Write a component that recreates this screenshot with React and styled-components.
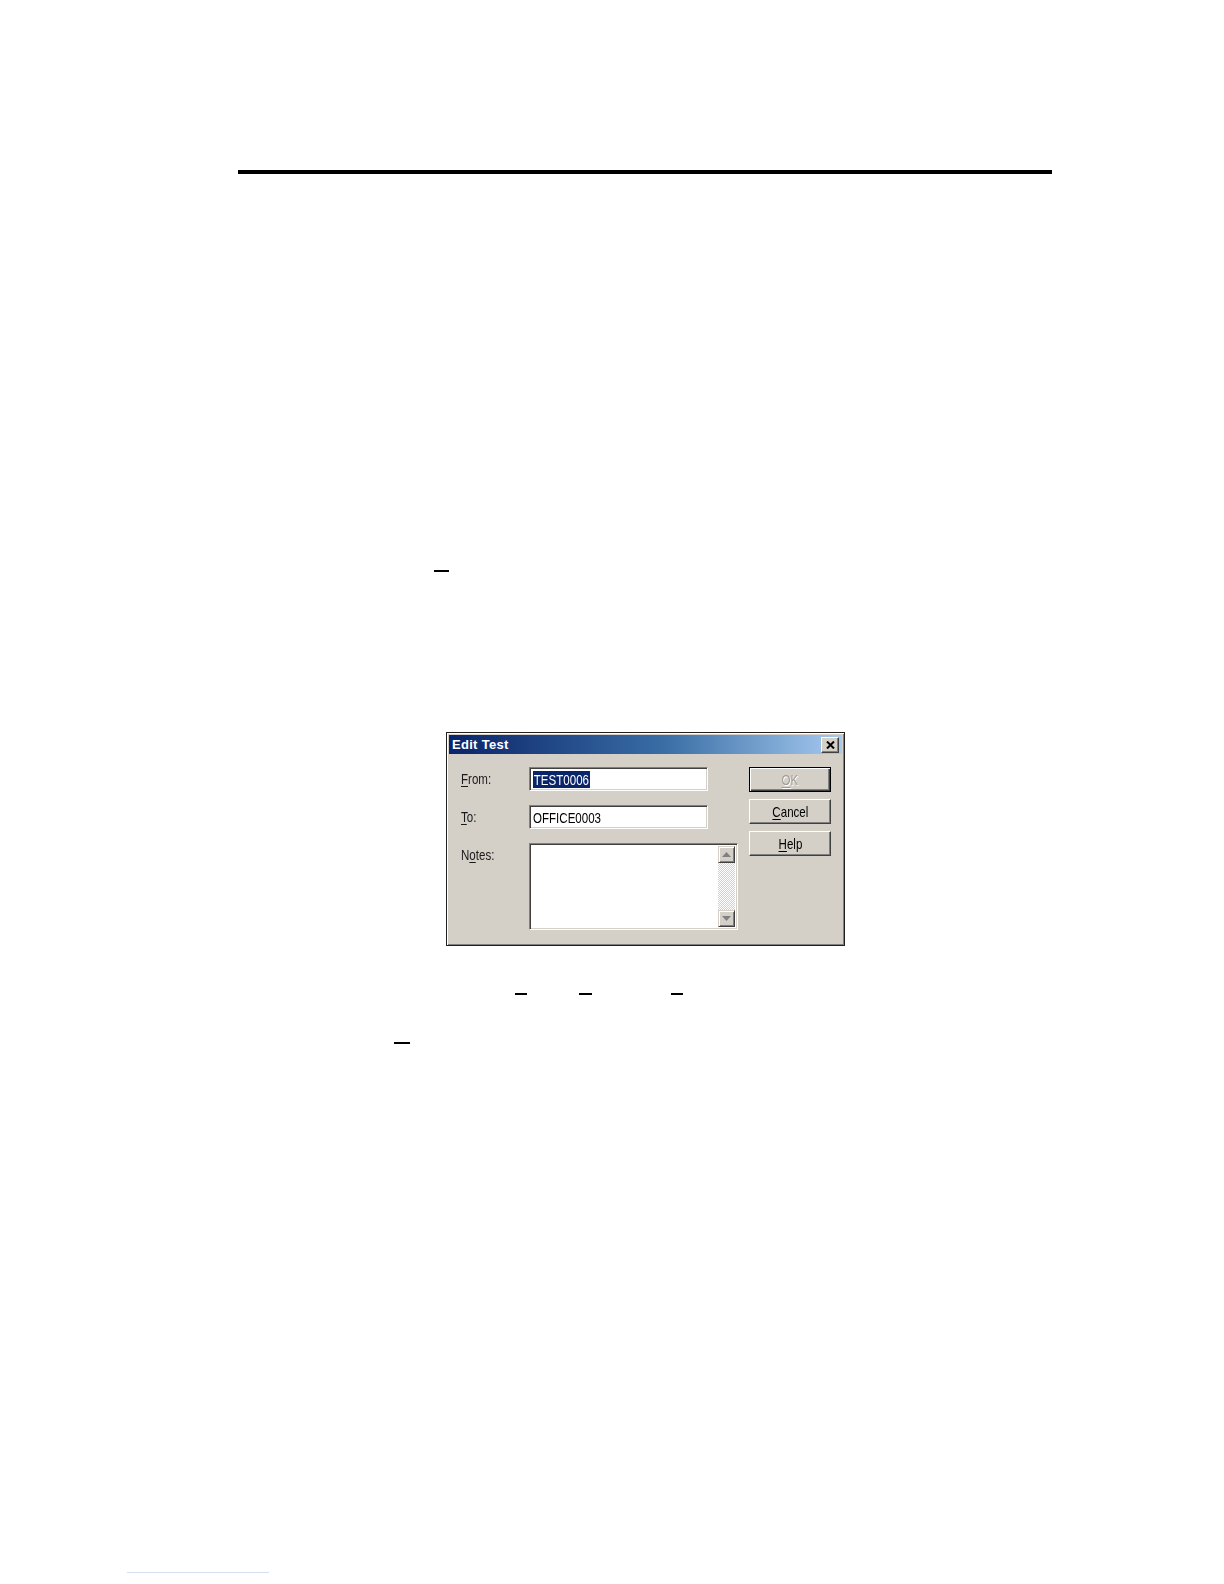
import React from "react";
import styled, { createGlobalStyle } from "styled-components";

const GlobalStyle = createGlobalStyle`
  html, body {
    margin: 0;
    padding: 0;
    background: #ffffff;
  }
  body {
    font-family: "Liberation Sans", Arial, sans-serif;
  }
`;

const Page = styled.div`
  width: 1224px;
  height: 1584px;
  overflow: hidden;
  background: #ffffff;
`;

const Rule = styled.div`
  margin: 170px 0 0 238px;
  width: 814px;
  height: 4px;
  background: #000000;
`;

const MarkLine = styled.div`
  display: flex;
  margin-top: ${(p) => p.$top}px;
  height: 3px;
`;

const Mark = styled.span`
  display: block;
  margin-left: ${(p) => p.$gap}px;
  width: ${(p) => p.$w}px;
  height: 2px;
  background: #000000;
`;

const LinkLine = styled.div`
  margin: ${(p) => p.$top}px 0 0 127px;
  width: 142px;
  height: 1px;
  background: #d6def2;
`;

const Dialog = styled.div`
  box-sizing: border-box;
  margin: 159px 0 0 446px;
  width: 399px;
  height: 214px;
  padding: 2px;
  background: #d4d0c8;
  border: 1px solid #202020;
  box-shadow: inset 1px 1px 0 #ffffff, inset -1px -1px 0 #808080;
  display: flex;
  flex-direction: column;
`;

const TitleBar = styled.div`
  height: 19px;
  display: flex;
  align-items: center;
  justify-content: space-between;
  padding: 0 3px 0 3px;
  background: linear-gradient(90deg, #0a246a 0%, #3a6ea5 55%, #a6caf0 100%);
`;

const Title = styled.span`
  color: #ffffff;
  font-family: "Liberation Sans", Arial, sans-serif;
  font-weight: bold;
  font-size: 13px;
  letter-spacing: 0.3px;
`;

const CloseButton = styled.div`
  box-sizing: border-box;
  width: 18px;
  height: 16px;
  background: #d4d0c8;
  border: 1px solid;
  border-color: #ffffff #404040 #404040 #ffffff;
  box-shadow: inset -1px -1px 0 #808080;
  display: flex;
  align-items: center;
  justify-content: center;
`;

const Body = styled.div`
  flex: 1;
  display: flex;
  padding: 13px 0 0 12px;
`;

const Form = styled.div`
  display: flex;
  flex-direction: column;
  gap: 14px;
`;

const Row = styled.div`
  display: flex;
  align-items: ${(p) => (p.$top ? "flex-start" : "center")};
`;

/* the capture is horizontally squeezed, so the UI text runs narrow */
const Narrow = styled.span`
  display: inline-block;
  font-family: "Liberation Sans", Arial, sans-serif;
  font-size: 15px;
  white-space: nowrap;
  transform: scaleX(0.77);
  transform-origin: ${(p) => (p.$center ? "center" : "left")} center;
`;

const Label = styled.div`
  width: 68px;
  padding-top: ${(p) => (p.$top ? 3 : 0)}px;
  color: #1a1a1a;
`;

const Key = styled.span`
  text-decoration: underline;
  text-underline-offset: 2px;
`;

const sunken = `
  box-sizing: border-box;
  background: #ffffff;
  border: 1px solid;
  border-color: #808080 #ffffff #ffffff #808080;
  box-shadow: inset 1px 1px 0 #404040, inset -1px -1px 0 #d4d0c8;
`;

const Input = styled.div`
  ${sunken}
  width: 179px;
  height: 24px;
  padding: 2px 3px;
  display: flex;
  align-items: center;
  color: #000000;
`;

const Selected = styled.span`
  background: #0a246a;
  color: #ffffff;
  padding: 0 1px;
`;

const TextArea = styled.div`
  ${sunken}
  width: 209px;
  height: 87px;
  padding: 2px;
  display: flex;
  justify-content: flex-end;
`;

const ScrollBar = styled.div`
  width: 17px;
  display: flex;
  flex-direction: column;
  justify-content: space-between;
  background-color: #ece9e4;
  background-image: repeating-conic-gradient(#d4d0c8 0% 25%, #ffffff 0% 50%);
  background-size: 2px 2px;
`;

const ArrowButton = styled.div`
  box-sizing: border-box;
  width: 17px;
  height: 17px;
  background: #d4d0c8;
  border: 1px solid;
  border-color: #d4d0c8 #404040 #404040 #d4d0c8;
  box-shadow: inset 1px 1px 0 #ffffff, inset -1px -1px 0 #808080;
  display: flex;
  align-items: center;
  justify-content: center;
`;

const Buttons = styled.div`
  display: flex;
  flex-direction: column;
  gap: 7px;
  margin-left: 11px;
`;

const Button = styled.div`
  box-sizing: border-box;
  width: 82px;
  height: 25px;
  background: #d4d0c8;
  border: 1px solid;
  border-color: ${(p) =>
    p.$default ? "#000000" : "#ffffff #404040 #404040 #ffffff"};
  box-shadow: ${(p) =>
    p.$default
      ? "inset 1px 1px 0 #ffffff, inset -1px -1px 0 #404040, inset -2px -2px 0 #808080"
      : "inset -1px -1px 0 #808080"};
  display: flex;
  align-items: center;
  justify-content: center;
  color: ${(p) => (p.$disabled ? "#a09c94" : "#000000")};
  text-shadow: ${(p) => (p.$disabled ? "1px 1px 0 #ffffff" : "none")};
`;

const Arrow = ({ down }) => (
  <svg width="9" height="5" viewBox="0 0 9 5">
    <path
      d={down ? "M0 0 H9 L4.5 5 Z" : "M0 5 H9 L4.5 0 Z"}
      fill="#808080"
    />
  </svg>
);

export default function App() {
  return (
    <Page>
      <GlobalStyle />
      <Rule />
      <MarkLine $top={396}>
        <Mark $gap={434} $w={15} />
      </MarkLine>

      <Dialog>
        <TitleBar>
          <Title>Edit Test</Title>
          <CloseButton>
            <svg width="9" height="8" viewBox="0 0 9 8">
              <path
                d="M1 0.5 L8 7.5 M8 0.5 L1 7.5"
                stroke="#000000"
                strokeWidth="2"
              />
            </svg>
          </CloseButton>
        </TitleBar>
        <Body>
          <Form>
            <Row>
              <Label>
                <Narrow>
                  <Key>F</Key>rom:
                </Narrow>
              </Label>
              <Input>
                <Narrow>
                  <Selected>TEST0006</Selected>
                </Narrow>
              </Input>
            </Row>
            <Row>
              <Label>
                <Narrow>
                  <Key>T</Key>o:
                </Narrow>
              </Label>
              <Input>
                <Narrow>OFFICE0003</Narrow>
              </Input>
            </Row>
            <Row $top>
              <Label $top>
                <Narrow>
                  N<Key>o</Key>tes:
                </Narrow>
              </Label>
              <TextArea>
                <ScrollBar>
                  <ArrowButton>
                    <Arrow />
                  </ArrowButton>
                  <ArrowButton>
                    <Arrow down />
                  </ArrowButton>
                </ScrollBar>
              </TextArea>
            </Row>
          </Form>
          <Buttons>
            <Button $default $disabled>
              <Narrow $center>
                <Key>O</Key>K
              </Narrow>
            </Button>
            <Button>
              <Narrow $center>
                <Key>C</Key>ancel
              </Narrow>
            </Button>
            <Button>
              <Narrow $center>
                <Key>H</Key>elp
              </Narrow>
            </Button>
          </Buttons>
        </Body>
      </Dialog>

      <MarkLine $top={47}>
        <Mark $gap={515} $w={12} />
        <Mark $gap={52} $w={13} />
        <Mark $gap={79} $w={12} />
      </MarkLine>
      <MarkLine $top={46}>
        <Mark $gap={394} $w={16} />
      </MarkLine>
      <LinkLine $top={527} />
    </Page>
  );
}
